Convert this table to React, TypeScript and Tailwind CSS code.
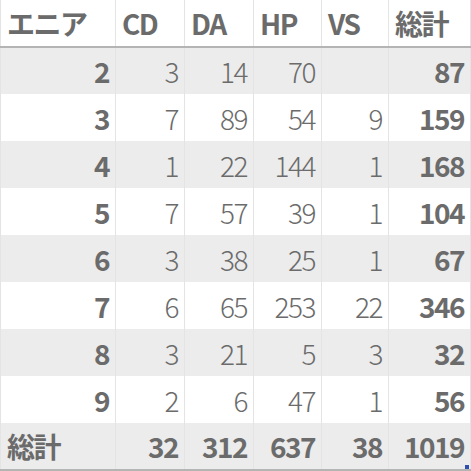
const rows = [
  { id: 2, cd: 3, da: 14, hp: 70, vs: null, total: 87 },
  { id: 3, cd: 7, da: 89, hp: 54, vs: 9, total: 159 },
  { id: 4, cd: 1, da: 22, hp: 144, vs: 1, total: 168 },
  { id: 5, cd: 7, da: 57, hp: 39, vs: 1, total: 104 },
  { id: 6, cd: 3, da: 38, hp: 25, vs: 1, total: 67 },
  { id: 7, cd: 6, da: 65, hp: 253, vs: 22, total: 346 },
  { id: 8, cd: 3, da: 21, hp: 5, vs: 3, total: 32 },
  { id: 9, cd: 2, da: 6, hp: 47, vs: 1, total: 56 },
];

const font = {
  fontFamily: '"Noto Sans CJK JP", sans-serif',
};

export default function App() {
  const cell = "h-[47px] px-[6px] border-x border-[#e4e4e4] text-[28px] leading-none tracking-[-1.5px]";
  return (
    <div className="w-[471px] h-[471px] bg-white text-[#6b6b6b] relative" style={font}>
      <table className="border-collapse table-fixed w-[470px]">
        <colgroup>
          <col className="w-[115px]" />
          <col className="w-[69px]" />
          <col className="w-[69px]" />
          <col className="w-[68px]" />
          <col className="w-[67px]" />
          <col className="w-[82px]" />
        </colgroup>
        <thead>
          <tr className="border-b-2 border-[#b4b4b4]">
            {["エニア", "CD", "DA", "HP", "VS", "総計"].map((h) => (
              <th key={h} className={`${cell} text-left font-bold`}>
                {h}
              </th>
            ))}
          </tr>
        </thead>
        <tbody>
          {rows.map((r, i) => (
            <tr key={r.id} className={i % 2 === 0 ? "bg-[#ececec]" : "bg-white"}>
              <td className={`${cell} text-right font-bold`}>{r.id}</td>
              <td className={`${cell} text-right font-light`}>{r.cd}</td>
              <td className={`${cell} text-right font-light`}>{r.da}</td>
              <td className={`${cell} text-right font-light`}>{r.hp}</td>
              <td className={`${cell} text-right font-light`}>{r.vs ?? ""}</td>
              <td className={`${cell} text-right font-bold`}>{r.total}</td>
            </tr>
          ))}
          <tr className="bg-[#ececec] border-b-2 border-[#b4b4b4]">
            <td className={`${cell} text-left font-bold`}>総計</td>
            <td className={`${cell} text-right font-bold`}>32</td>
            <td className={`${cell} text-right font-bold`}>312</td>
            <td className={`${cell} text-right font-bold`}>637</td>
            <td className={`${cell} text-right font-bold`}>38</td>
            <td className={`${cell} text-right font-bold`}>1019</td>
          </tr>
        </tbody>
      </table>
      <div className="absolute left-[465px] top-[465px] w-[4px] h-[4px] bg-[#2f4fb0]" />
    </div>
  );
}
